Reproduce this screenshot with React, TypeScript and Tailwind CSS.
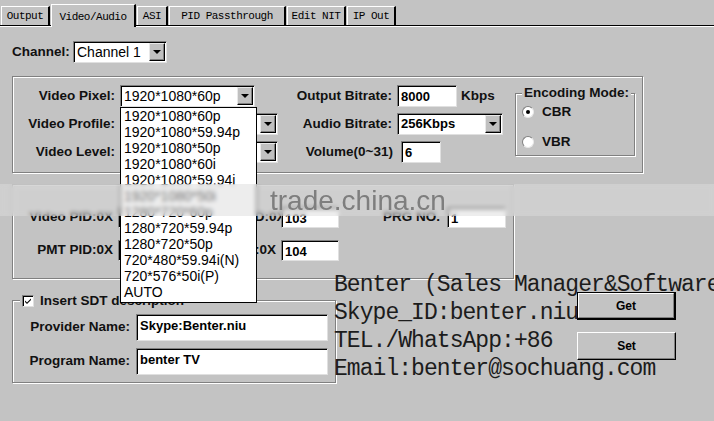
import React from "react";

const sunken =
  "bg-white border border-t-[#808080] border-l-[#808080] border-r-[#e0e0e0] border-b-[#e0e0e0] shadow-[inset_1px_1px_0_#000]";
const etched = "border border-[#808080] shadow-[inset_1px_1px_0_#fff,1px_1px_0_#fff]";
const label = "font-bold text-[13.5px] text-[#111] whitespace-nowrap";

function Arrow() {
  return (
    <div className="ml-auto mr-[1px] my-[1px] w-[16px] self-stretch bg-[#c0c0c0] border border-t-[#e8e8e8] border-l-[#e8e8e8] border-r-black border-b-black shadow-[inset_-1px_-1px_0_#808080] flex items-center justify-center">
      <div className="w-0 h-0 border-l-[4px] border-r-[4px] border-t-[4px] border-l-transparent border-r-transparent border-t-black" />
    </div>
  );
}

function Combo({ cls, text, bold }: { cls: string; text: string; bold?: boolean }) {
  return (
    <div className={`${sunken} ${cls} flex items-stretch`}>
      <div className={`pl-[3px] self-center whitespace-nowrap ${bold ? "font-bold text-[13px]" : "text-[14px]"} text-black`}>{text}</div>
      <Arrow />
    </div>
  );
}

function Input({ cls, text }: { cls: string; text: string }) {
  return (
    <div className={`${sunken} ${cls} flex items-start pl-[3px] pt-[1px] font-bold text-[13px] text-black whitespace-nowrap`}>
      {text}
    </div>
  );
}

function Radio({ on }: { on?: boolean }) {
  return (
    <div className="w-[12px] h-[12px] rounded-full bg-white border border-t-[#808080] border-l-[#808080] border-r-[#e8e8e8] border-b-[#e8e8e8] flex items-center justify-center">
      {on && <div className="w-[4px] h-[4px] rounded-full bg-black" />}
    </div>
  );
}

const tabs = [
  { t: "Output", w: "w-[49px]" },
  { t: "Video/Audio", w: "w-[85px]", sel: true },
  { t: "ASI", w: "w-[31px]" },
  { t: "PID Passthrough", w: "w-[117px]" },
  { t: "Edit NIT", w: "w-[59px]" },
  { t: "IP Out", w: "w-[49px]" },
];

const items = [
  "1920*1080*60p",
  "1920*1080*59.94p",
  "1920*1080*50p",
  "1920*1080*60i",
  "1920*1080*59.94i",
  "1920*1080*50i",
  "1280*720*60p",
  "1280*720*59.94p",
  "1280*720*50p",
  "720*480*59.94i(N)",
  "720*576*50i(P)",
  "AUTO",
];

export default function App() {
  return (
    <div className="relative w-[714px] h-[421px] overflow-hidden bg-[#c3c3c3] font-['Liberation_Sans',Arial,sans-serif] text-black">
      {/* Tab strip */}
      <div className="h-[27px]">
        <div className="flex items-end h-[25px] pl-[1px] gap-[1px]">
          {tabs.map((tb) =>
            tb.sel ? (
              <div
                key={tb.t}
                className={`${tb.w} relative z-10 h-[23px] -mb-[2px] bg-[#c3c3c3] border-t border-l border-white border-r-2 border-r-black flex items-start justify-center pt-[4px] font-['Liberation_Mono',monospace] text-[11px] tracking-[-0.5px] whitespace-nowrap`}
              >
                {tb.t}
              </div>
            ) : (
              <div
                key={tb.t}
                className={`${tb.w} h-[19px] bg-[#c3c3c3] border-t border-l border-white border-r-2 border-r-black flex items-center justify-center font-['Liberation_Mono',monospace] text-[11px] tracking-[-0.5px] whitespace-nowrap`}
              >
                {tb.t}
              </div>
            )
          )}
        </div>
        <div className="h-[1px] bg-black" />
        <div className="h-[1px] bg-white" />
      </div>

      {/* Channel */}
      <div className="mt-[14px] ml-[12px] flex items-center h-[22px]">
        <div className={`${label} w-[61px]`}>Channel:</div>
        <Combo cls="w-[94px] h-[22px]" text="Channel 1" />
      </div>

      {/* Video group */}
      <div className={`${etched} ml-[12px] mt-[13px] w-[631px] h-[97px] flex pt-[8px]`}>
        <div className="w-[265px] flex flex-col gap-[6px]">
          <div className="flex items-center h-[22px]">
            <div className={`${label} w-[102px] text-right`}>Video Pixel:</div>
            <Combo cls="ml-[5px] w-[135px] h-[22px]" text="1920*1080*60p" />
          </div>
          <div className="flex items-center h-[22px]">
            <div className={`${label} w-[102px] text-right`}>Video Profile:</div>
            <Combo cls="ml-[5px] w-[158px] h-[22px]" text="High" />
          </div>
          <div className="flex items-center h-[22px]">
            <div className={`${label} w-[102px] text-right`}>Video Level:</div>
            <Combo cls="ml-[5px] w-[158px] h-[22px]" text="4.1" />
          </div>
        </div>
        <div className="w-[230px] flex flex-col gap-[6px]">
          <div className="flex items-center h-[22px]">
            <div className={`${label} w-[114px] text-right`}>Output Bitrate:</div>
            <Input cls="ml-[5px] w-[60px] h-[22px]" text="8000" />
            <div className={`${label} ml-[4px]`}>Kbps</div>
          </div>
          <div className="flex items-center h-[22px]">
            <div className={`${label} w-[114px] text-right`}>Audio Bitrate:</div>
            <Combo cls="ml-[5px] w-[106px] h-[22px]" text="256Kbps" bold />
          </div>
          <div className="flex items-center h-[22px]">
            <div className={`${label} w-[115px] text-right`}>Volume(0~31)</div>
            <Input cls="ml-[8px] w-[40px] h-[22px]" text="6" />
          </div>
        </div>
        <div className={`${etched} relative ml-[7px] mt-[8px] w-[120px] h-[63px] flex flex-col pl-[6px] pt-[10px] gap-[14px]`}>
          <div className={`${label} absolute -top-[9px] left-[6px] bg-[#c3c3c3] px-[2px] leading-[16px]`}>Encoding Mode:</div>
          <div className="flex items-center gap-[8px] h-[16px]">
            <Radio on />
            <span className={`${label} leading-[16px]`}>CBR</span>
          </div>
          <div className="flex items-center gap-[8px] h-[16px]">
            <Radio />
            <span className={`${label} leading-[16px]`}>VBR</span>
          </div>
        </div>
      </div>

      {/* PID group */}
      <div className={`${etched} ml-[12px] mt-[11px] w-[502px] h-[95px] flex flex-col pt-[22px] gap-[12px]`}>
        <div className="flex items-center h-[21px]">
          <div className={`${label} w-[100px] text-right`}>Video PID:0X</div>
          <Input cls="ml-[5px] w-[82px] h-[21px]" text="101" />
          <div className={`${label} w-[76px] text-right`}>Audio PID:0X</div>
          <Input cls="ml-[5px] w-[58px] h-[21px]" text="103" />
          <div className={`${label} w-[101px] text-right`}>PRG NO.</div>
          <Input cls="ml-[7px] w-[59px] h-[21px]" text="1" />
        </div>
        <div className="flex items-center h-[21px]">
          <div className={`${label} w-[100px] text-right`}>PMT PID:0X</div>
          <Input cls="ml-[5px] w-[82px] h-[21px]" text="100" />
          <div className={`${label} w-[76px] text-right`}>PCR PID:0X</div>
          <Input cls="ml-[5px] w-[58px] h-[21px]" text="104" />
        </div>
      </div>

      {/* Bottom */}
      <div className="mt-[13px] flex items-start">
        <div className={`${etched} relative ml-[12px] mt-[8px] w-[324px] h-[83px] flex flex-col pt-[13px] gap-[7px]`}>
          <div className="absolute -top-[7px] left-[7px] bg-[#c3c3c3] px-[2px] flex items-center gap-[6px] h-[14px]">
            <div className={`w-[12px] h-[12px] ${sunken} flex items-center justify-center`}>
              <svg width="8" height="8" viewBox="0 0 8 8">
                <path d="M1 3.5 L3 5.5 L7 1.5 L7 3 L3 7 L1 5 Z" fill="#000" />
              </svg>
            </div>
            <span className={label}>Insert SDT description</span>
          </div>
          <div className="flex items-center h-[27px]">
            <div className={`${label} w-[117px] text-right`}>Provider Name:</div>
            <Input cls="ml-[6px] w-[192px] h-[27px]" text="Skype:Benter.niu" />
          </div>
          <div className="flex items-center h-[27px]">
            <div className={`${label} w-[117px] text-right`}>Program Name:</div>
            <Input cls="ml-[6px] w-[192px] h-[27px]" text="benter TV" />
          </div>
        </div>
        <div className="ml-[241px] flex flex-col gap-[12px]">
          <div className="w-[99px] h-[28px] bg-[#c3c3c3] border border-black border-r-2 border-b-2 flex">
            <div className="flex-1 border border-t-white border-l-white border-r-[#808080] border-b-[#808080] flex items-center justify-center font-bold text-[12px]">
              Get
            </div>
          </div>
          <div className="w-[99px] h-[28px] bg-[#c3c3c3] border border-t-white border-l-white border-r-black border-b-black shadow-[inset_-1px_-1px_0_#808080] flex items-center justify-center font-bold text-[12px]">
            Set
          </div>
        </div>
      </div>

      {/* Dropdown list */}
      <div className="absolute left-[120px] top-[107px] w-[137px] h-[196px] bg-white border border-black z-20 flex flex-col">
        {items.map((it) => (
          <div key={it} className="h-[16px] leading-[16px] pl-[3px] text-[14px] text-black whitespace-nowrap">
            {it}
          </div>
        ))}
      </div>

      {/* Watermark band */}
      <div className="absolute left-0 top-[184px] w-[714px] h-[32px] z-30 backdrop-blur-[2px] bg-[#dcdcdc]/50">
        <div className="absolute left-[270px] top-[-4px] text-[28px] text-[#7e7e7e] blur-[0.6px] whitespace-nowrap">
          trade.china.cn
        </div>
      </div>

      {/* Contact overlay */}
      <div className="absolute left-[334px] top-[271px] z-40 font-['Liberation_Mono',monospace] text-[23px] leading-[28px] tracking-[-0.95px] text-[#1c1c1c] whitespace-pre">
        <div>Benter (Sales Manager&amp;Software</div>
        <div>Skype_ID:benter.niu</div>
        <div>TEL./WhatsApp:+86</div>
        <div>Email:benter@sochuang.com</div>
      </div>
    </div>
  );
}
